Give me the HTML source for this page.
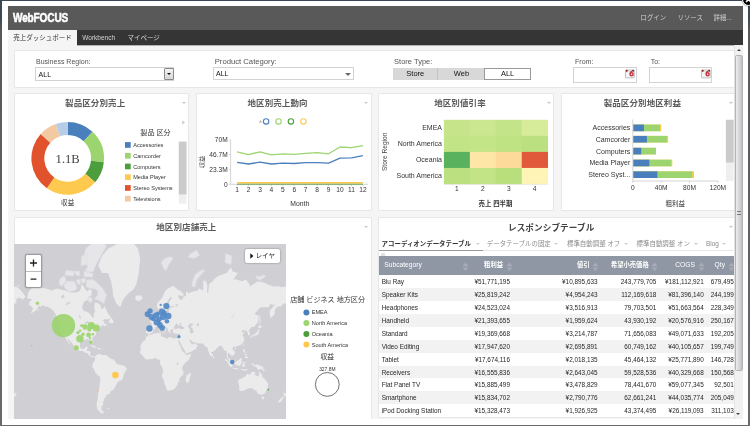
<!DOCTYPE html>
<html lang="ja"><head><meta charset="utf-8"><title>WebFOCUS</title>
<style>
html,body{margin:0;padding:0}
body{width:750px;height:426px;overflow:hidden;position:relative;background:linear-gradient(#3a4654 0,#3e4956 18px,#585858 30px,#6a6a6a 100%);font-family:"Liberation Sans","Noto Sans CJK JP",sans-serif;font-size:7px;color:#444;-webkit-text-size-adjust:none}
div,span{position:absolute;box-sizing:border-box;white-space:nowrap}
svg{position:absolute;left:0;top:0;overflow:hidden}
svg text{font-family:"Liberation Sans","Noto Sans CJK JP",sans-serif}
.lb{left:2px;top:1px;width:746px;height:423.5px;background:#fff}
.app{filter:blur(.4px);left:8px;top:6px;width:734.8px;height:413px;background:#f5f5f5;overflow:hidden}
.hdr{left:0;top:0;width:735px;height:24px;background:#595959}
.logo{left:5.4px;top:4.3px;font-weight:bold;font-size:13px;line-height:16px;color:#fff;transform:scaleX(.775);transform-origin:0 0;letter-spacing:-.2px;-webkit-text-stroke:.55px #fff}
.hl{top:6.8px;font-size:6.4px;line-height:9px;color:#cfcfcf}
.tabs{left:0;top:24px;width:735px;height:15.4px;background:#353535}
.tab{top:0;height:15.3px;font-size:6.5px;line-height:16.4px;color:#d5d5d5}
.tab.on{left:0;width:69px;background:#f5f5f5;color:#333;text-align:center}
.panel{background:#fff;border:1px solid #e7e7e7;border-radius:1px}
.pt{left:0;right:12.4px;text-align:center;font-weight:bold;font-size:8.5px;line-height:12px;margin-top:-1.5px;color:#5a5a5a;letter-spacing:.1px}
.lab{font-size:7px;line-height:9px;color:#555}
.sel{background:#fff;border:1px solid #d2d2d2;font-size:7px;line-height:11px;color:#111;padding-left:2.6px}
.caret{width:0;height:0;border-left:2.2px solid transparent;border-right:2.2px solid transparent;border-top:2.4px solid #c8c8c8}
.leg{font-size:5.6px;line-height:8px;color:#333}
.sw{width:5.6px;height:5.6px}
.sb{left:726px;top:39.3px;width:8.8px;height:374px;background:#f1f1f1;border-left:1px solid #e3e3e3}
.thumb{left:0px;top:9.5px;width:7.8px;height:316px;background:linear-gradient(90deg,#ececec,#d4d4d8 60%,#bdbdc3);border:1px solid #b4b4b8;border-radius:1.5px}
.th{top:0;font-size:6.7px;line-height:17.8px;color:#fff}
.tr{left:0;width:357px;height:12.93px}
.tr.alt{background:#f2f2f2}
.td{top:0;font-size:6.4px;line-height:14.5px;color:#262626}
.r{text-align:right}
.ttab{top:0;font-size:6.45px;line-height:10px;color:#8a8a8a}
.ttab b{color:#333;font-weight:bold}
</style></head><body>
<div class="lb"></div>
<div class="app">
<div class="hdr"><div class="logo">WebFOCUS</div>
<div class="hl" style="left:632.6px">ログイン</div><div class="hl" style="left:669.6px">リソース</div><div class="hl" style="left:705.6px">詳細...</div></div>
<div style="left:69px;top:39.4px;width:666px;height:1px;background:#b4b4b4"></div><div class="tabs"><div class="tab on">売上ダッシュボード</div><div class="tab" style="left:74.3px">Workbench</div><div class="tab" style="left:119.4px">マイページ</div></div>
<div class="panel" style="left:5.5px;top:44.0px;width:722.9px;height:38.0px;"><div class="lab" style="left:21.5px;top:6.2px">Business Region:</div><div class="sel" style="left:20.5px;top:16px;width:139.4px;height:14px;line-height:14px">ALL<div style="right:-0.4px;top:-0.4px;width:9.4px;height:12.8px;background:linear-gradient(#f4f4f4,#d6d6d6);border:1px solid #8a8a8a;border-radius:1px"><div class="caret" style="left:1.7px;top:4.6px;border-top-color:#111;border-left-width:2px;border-right-width:2px"></div></div></div><div class="lab" style="left:200.2px;top:6.2px;font-size:7.7px">Product Category:</div><div class="sel" style="left:198.9px;top:16.4px;width:140.8px;height:12.4px;line-height:12.6px;padding-left:1.6px">ALL<div class="caret" style="right:2.4px;top:4.6px;border-top-color:#6a6a6a;border-left-width:3px;border-right-width:3px;border-top-width:3px"></div></div><div class="lab" style="left:379.6px;top:6.2px;font-size:7.5px">Store Type:</div><div style="left:378.7px;top:16.6px;width:137.5px;height:12.4px;background:#d8d8d8;font-size:7.5px;line-height:12px;color:#111;text-align:center"><div style="left:0;width:45.3px;border-right:1px solid #c4c4c4;height:12px">Store</div><div style="left:45.3px;width:46px;height:12px">Web</div><div style="left:91.3px;width:46.2px;height:12px;background:#fff;border:1px solid #999;line-height:10px">ALL</div></div><div class="lab" style="left:560.6px;top:6.2px">From:</div><div class="sel" style="left:558.6px;top:16.4px;width:63.5px;height:15.4px"><svg width="10" height="10" viewBox="0 0 10 10" style="left:auto;right:.5px;top:.9px"><rect x=".5" y="1" width="8.8" height="7.9" rx=".6" fill="#f3f5f9" stroke="#9a9a9a" stroke-width=".6"/><path d="M.9 2.7H9" stroke="#d9c7b0" stroke-width=".6"/><circle cx="1.7" cy="1.8" r=".95" fill="#7d1216"/><circle cx="8.1" cy="1.8" r=".95" fill="#7d1216"/><path d="M6.9 2.1C5.6 2.9 5.1 4 5.2 5" fill="none" stroke="#c8373d" stroke-width="1.3"/><circle cx="6.6" cy="5.2" r="1.5" fill="#fff" stroke="#c8373d" stroke-width="1.5"/></svg></div><div class="lab" style="left:636.2px;top:6.2px">To:</div><div class="sel" style="left:634.2px;top:16.4px;width:63.5px;height:15.4px"><svg width="10" height="10" viewBox="0 0 10 10" style="left:auto;right:.5px;top:.9px"><rect x=".5" y="1" width="8.8" height="7.9" rx=".6" fill="#f3f5f9" stroke="#9a9a9a" stroke-width=".6"/><path d="M.9 2.7H9" stroke="#d9c7b0" stroke-width=".6"/><circle cx="1.7" cy="1.8" r=".95" fill="#7d1216"/><circle cx="8.1" cy="1.8" r=".95" fill="#7d1216"/><path d="M6.9 2.1C5.6 2.9 5.1 4 5.2 5" fill="none" stroke="#c8373d" stroke-width="1.3"/><circle cx="6.6" cy="5.2" r="1.5" fill="#fff" stroke="#c8373d" stroke-width="1.5"/></svg></div></div><div class="panel" style="left:5.5px;top:87.0px;width:175.7px;height:118.0px;"><div class="pt" style="top:4.6px">製品区分別売上</div><div class="caret" style="right:2.4px;top:8.4px"></div><svg width="176" height="118" viewBox="0 0 176 118"><path d="M52.70 28.10A36.3 36.3 0 0 1 77.46 37.85L68.66 47.29A23.4 23.4 0 0 0 52.70 41.00Z" fill="#4a7fbd"/><path d="M77.46 37.85A36.3 36.3 0 0 1 88.80 68.19L75.97 66.85A23.4 23.4 0 0 0 68.66 47.29Z" fill="#9cd56f"/><path d="M88.80 68.19A36.3 36.3 0 0 1 80.10 88.21L70.36 79.75A23.4 23.4 0 0 0 75.97 66.85Z" fill="#4b9e3b"/><path d="M80.10 88.21A36.3 36.3 0 0 1 31.88 94.14L39.28 83.57A23.4 23.4 0 0 0 70.36 79.75Z" fill="#fdc94f"/><path d="M31.88 94.14A36.3 36.3 0 0 1 25.72 40.11L35.31 48.74A23.4 23.4 0 0 0 39.28 83.57Z" fill="#e0532c"/><path d="M25.72 40.11A36.3 36.3 0 0 1 40.88 30.08L45.08 42.27A23.4 23.4 0 0 0 35.31 48.74Z" fill="#f2c9a0"/><path d="M40.88 30.08A36.3 36.3 0 0 1 52.70 28.10L52.70 41.00A23.4 23.4 0 0 0 45.08 42.27Z" fill="#b5cde6"/><text x="52.7" y="68.60000000000001" text-anchor="middle" font-size="12.6" style="font-family:'Liberation Serif',serif" fill="#444">1.1B</text><text x="52.7" y="110.9" text-anchor="middle" font-size="6.6" fill="#333">収益</text><text x="140.5" y="41.40000000000001" text-anchor="middle" font-size="7.1" fill="#333">製品 区分</text><rect x="110.0" y="48.1" width="5.7" height="5.7" fill="#4a7fbd"/><text x="118.19999999999999" y="53.0" font-size="5.6" fill="#333">Accessories</text><rect x="110.0" y="58.9" width="5.7" height="5.7" fill="#9cd56f"/><text x="118.19999999999999" y="63.8" font-size="5.6" fill="#333">Camcorder</text><rect x="110.0" y="69.6" width="5.7" height="5.7" fill="#4b9e3b"/><text x="118.19999999999999" y="74.5" font-size="5.6" fill="#333">Computers</text><rect x="110.0" y="80.3" width="5.7" height="5.7" fill="#fdc94f"/><text x="118.19999999999999" y="85.2" font-size="5.6" fill="#333">Media Player</text><rect x="110.0" y="91.1" width="5.7" height="5.7" fill="#e0532c"/><text x="118.19999999999999" y="96.0" font-size="5.6" fill="#333">Stereo Systems</text><rect x="110.0" y="101.8" width="5.7" height="5.7" fill="#f2c9a0"/><text x="118.19999999999999" y="106.8" font-size="5.6" fill="#333">Televisions</text><path d="M167.1 26.599999999999994l3 2-3 2z" fill="#ccc"/><rect x="163.8" y="47.69999999999999" width="7.7" height="62" fill="#efefef"/><rect x="163.8" y="47.69999999999999" width="7.7" height="52.7" fill="#cbcbcb"/></svg></div><div class="panel" style="left:187.9px;top:87.0px;width:175.7px;height:118.0px;"><div class="pt" style="top:4.6px">地区別売上動向</div><div class="caret" style="right:2.4px;top:8.4px"></div><svg width="176" height="118" viewBox="196.9 94 176 118"><circle cx="266" cy="121.4" r="2.7" fill="#fff" stroke="#4a7fbd" stroke-width="1.1"/><circle cx="278.4" cy="121.4" r="2.7" fill="#fff" stroke="#9cd56f" stroke-width="1.1"/><circle cx="290.8" cy="121.4" r="2.7" fill="#fff" stroke="#4b9e3b" stroke-width="1.1"/><circle cx="303.3" cy="121.4" r="2.7" fill="#fff" stroke="#fdc94f" stroke-width="1.1"/><path d="M258.8 122.8l1.6-3 1.6 3z" fill="#bbb"/><path d="M228.8 140H230.5V184.3H368M228.8 154.7h1.7M228.8 169.4h1.7M228.8 184.3h1.7" fill="none" stroke="#c9c9c9" stroke-width=".8"/><path d="M237.0 184.3v1.8M248.4 184.3v1.8M259.9 184.3v1.8M271.3 184.3v1.8M282.7 184.3v1.8M294.2 184.3v1.8M305.6 184.3v1.8M317.1 184.3v1.8M328.5 184.3v1.8M339.9 184.3v1.8M351.4 184.3v1.8M362.8 184.3v1.8" stroke="#c9c9c9" stroke-width=".8"/><polyline points="237.0,151.8 248.4,154.6 259.9,151.8 271.3,154.8 282.7,153.8 294.2,154.3 305.6,153.3 317.1,152.6 328.5,153.8 339.9,147.0 351.4,147.7 362.8,145.7" fill="none" stroke="#9cd56f" stroke-width="1.3" stroke-linejoin="round"/><polyline points="237.0,162.4 248.4,164.0 259.9,162.2 271.3,164.0 282.7,163.2 294.2,163.5 305.6,162.7 317.1,162.7 328.5,163.2 339.9,158.1 351.4,157.9 362.8,155.6" fill="none" stroke="#4a7fbd" stroke-width="1.3" stroke-linejoin="round"/><path d="M237 184.1H362.8" stroke="#4b9e3b" stroke-width="1"/><path d="M237 182.8H362.8" stroke="#fdc94f" stroke-width="1.5"/><text x="227.6" y="142.4" text-anchor="end" font-size="6.6" fill="#333">70M</text><text x="227.6" y="157.1" text-anchor="end" font-size="6.6" fill="#333">46.7M</text><text x="227.6" y="171.8" text-anchor="end" font-size="6.6" fill="#333">23.3M</text><text x="227.6" y="186.70000000000002" text-anchor="end" font-size="6.6" fill="#333">0</text><text x="237.0" y="192.4" text-anchor="middle" font-size="6.6" fill="#333">1</text><text x="248.4" y="192.4" text-anchor="middle" font-size="6.6" fill="#333">2</text><text x="259.9" y="192.4" text-anchor="middle" font-size="6.6" fill="#333">3</text><text x="271.3" y="192.4" text-anchor="middle" font-size="6.6" fill="#333">4</text><text x="282.7" y="192.4" text-anchor="middle" font-size="6.6" fill="#333">5</text><text x="294.2" y="192.4" text-anchor="middle" font-size="6.6" fill="#333">6</text><text x="305.6" y="192.4" text-anchor="middle" font-size="6.6" fill="#333">7</text><text x="317.1" y="192.4" text-anchor="middle" font-size="6.6" fill="#333">8</text><text x="328.5" y="192.4" text-anchor="middle" font-size="6.6" fill="#333">9</text><text x="339.9" y="192.4" text-anchor="middle" font-size="6.6" fill="#333">10</text><text x="351.4" y="192.4" text-anchor="middle" font-size="6.6" fill="#333">11</text><text x="362.8" y="192.4" text-anchor="middle" font-size="6.6" fill="#333">12</text><text x="299.7" y="205.6" text-anchor="middle" font-size="6.8" fill="#333">Month</text><text transform="translate(204.3 162) rotate(-90)" text-anchor="middle" font-size="6.2" fill="#333">収益</text></svg></div><div class="panel" style="left:370.3px;top:87.0px;width:175.7px;height:118.0px;"><div class="pt" style="top:4.6px">地区別値引率</div><div class="caret" style="right:2.4px;top:8.4px"></div><svg width="176" height="118" viewBox="379.3 94 176 118"><rect x="444.20" y="119.80" width="26.25" height="16.35" fill="#c6e58b"/><rect x="470.15" y="119.80" width="26.25" height="16.35" fill="#cbe78f"/><rect x="496.10" y="119.80" width="26.25" height="16.35" fill="#c4e489"/><rect x="522.05" y="119.80" width="26.25" height="16.35" fill="#d6ec9b"/><rect x="444.20" y="135.85" width="26.25" height="16.35" fill="#c3e387"/><rect x="470.15" y="135.85" width="26.25" height="16.35" fill="#c4e488"/><rect x="496.10" y="135.85" width="26.25" height="16.35" fill="#bfe283"/><rect x="522.05" y="135.85" width="26.25" height="16.35" fill="#bbe07f"/><rect x="444.20" y="151.90" width="26.25" height="16.35" fill="#59b25e"/><rect x="470.15" y="151.90" width="26.25" height="16.35" fill="#fee6a6"/><rect x="496.10" y="151.90" width="26.25" height="16.35" fill="#fdda99"/><rect x="522.05" y="151.90" width="26.25" height="16.35" fill="#e0593a"/><rect x="444.20" y="167.95" width="26.25" height="16.35" fill="#bbe07f"/><rect x="470.15" y="167.95" width="26.25" height="16.35" fill="#c2e386"/><rect x="496.10" y="167.95" width="26.25" height="16.35" fill="#b9df7d"/><rect x="522.05" y="167.95" width="26.25" height="16.35" fill="#fef4b6"/><path d="M444.2 184.4H548.0" stroke="#ddd" stroke-width=".6"/><text x="442.3" y="130.2" text-anchor="end" font-size="7" fill="#333">EMEA</text><text x="442.3" y="146.3" text-anchor="end" font-size="7" fill="#333">North America</text><text x="442.3" y="162.3" text-anchor="end" font-size="7" fill="#333">Oceania</text><text x="442.3" y="178.4" text-anchor="end" font-size="7" fill="#333">South America</text><text x="457.2" y="191" text-anchor="middle" font-size="6.6" fill="#333">1</text><text x="483.1" y="191" text-anchor="middle" font-size="6.6" fill="#333">2</text><text x="509.1" y="191" text-anchor="middle" font-size="6.6" fill="#333">3</text><text x="535.0" y="191" text-anchor="middle" font-size="6.6" fill="#333">4</text><text x="495.8" y="205.7" text-anchor="middle" font-size="6.4" fill="#333" font-weight="bold">売上 四半期</text><text transform="translate(387.6 151.8) rotate(-90)" text-anchor="middle" font-size="6.6" fill="#444">Store Region</text></svg></div><div class="panel" style="left:552.7px;top:87.0px;width:175.7px;height:118.0px;"><div class="pt" style="top:4.6px">製品区分別地区利益</div><div class="caret" style="right:2.4px;top:8.4px"></div><svg width="176" height="118" viewBox="561.7 94 176 118"><rect x="632.9" y="124.6" width="28.0" height="6.6" fill="#fdc94f"/><rect x="632.9" y="124.6" width="26.8" height="6.6" fill="#9cd56f"/><rect x="632.9" y="124.6" width="10.7" height="6.6" fill="#4a7fbd"/><text x="630" y="130.3" text-anchor="end" font-size="7" fill="#333">Accessories</text><rect x="632.9" y="135.9" width="34.9" height="6.6" fill="#fdc94f"/><rect x="632.9" y="135.9" width="33.7" height="6.6" fill="#9cd56f"/><rect x="632.9" y="135.9" width="13.7" height="6.6" fill="#4a7fbd"/><text x="630" y="141.6" text-anchor="end" font-size="7" fill="#333">Camcorder</text><rect x="632.9" y="147.8" width="22.7" height="6.6" fill="#fdc94f"/><rect x="632.9" y="147.8" width="22.7" height="6.6" fill="#9cd56f"/><rect x="632.9" y="147.8" width="8.0" height="6.6" fill="#4a7fbd"/><text x="630" y="153.5" text-anchor="end" font-size="7" fill="#333">Computers</text><rect x="632.9" y="159.7" width="39.1" height="6.6" fill="#fdc94f"/><rect x="632.9" y="159.7" width="37.9" height="6.6" fill="#9cd56f"/><rect x="632.9" y="159.7" width="16.1" height="6.6" fill="#4a7fbd"/><text x="630" y="165.4" text-anchor="end" font-size="7" fill="#333">Media Player</text><rect x="632.9" y="171.4" width="60.8" height="6.6" fill="#fdc94f"/><rect x="632.9" y="171.4" width="59.0" height="6.6" fill="#9cd56f"/><rect x="632.9" y="171.4" width="24.2" height="6.6" fill="#4a7fbd"/><text x="630" y="177.1" text-anchor="end" font-size="7" fill="#333">Stereo Syst...</text><path d="M632.5 119.5V181H717.8M632.5 181v1.8M660.9 181v1.8M689.2 181v1.8M717.5 181v1.8" fill="none" stroke="#c9c9c9" stroke-width=".8"/><text x="632.5" y="190.3" text-anchor="middle" font-size="6.6" fill="#333">0</text><text x="660.9" y="190.3" text-anchor="middle" font-size="6.6" fill="#333">40M</text><text x="689.2" y="190.3" text-anchor="middle" font-size="6.6" fill="#333">80M</text><text x="717.5" y="190.3" text-anchor="middle" font-size="6.6" fill="#333">120M</text><text x="675" y="205.6" text-anchor="middle" font-size="6.6" fill="#333">粗利益</text><rect x="725.6" y="119.8" width="7.7" height="61.2" fill="#efefef"/><rect x="725.6" y="119.8" width="7.7" height="42.7" fill="#cbcbcb"/></svg></div><div class="panel" style="left:5.5px;top:211.0px;width:358.1px;height:215.0px;"><div class="pt" style="top:4.8px">地区別店舗売上</div><div class="caret" style="right:2.4px;top:8.4px"></div><svg width="272" height="175.9" viewBox="14 243.5 272 175.9" style="left:-0.5px;top:25.5px"><rect x="14" y="243.5" width="272" height="175.9" fill="#cfcfd4"/><defs><g id="w"><path d="M27.0 296.9L28.5 291.5L32.2 287.3L35.6 285.0L40.5 286.8L47.2 288.6L51.8 290.1L57.0 287.9L60.8 289.0L65.2 290.1L70.5 292.1L76.5 292.1L80.2 290.1L81.8 283.3L84.8 287.9L87.0 291.1L89.2 289.0L91.9 290.1L91.5 295.0L88.5 296.0L87.8 299.5L84.8 300.4L83.2 302.8L82.1 307.4L83.6 310.2L87.0 311.2L89.2 312.5L91.5 315.5L93.0 317.5L93.8 316.7L93.8 313.6L95.2 310.2L94.1 307.4L94.9 302.0L98.2 302.8L100.5 304.4L100.9 307.7L102.8 308.4L104.2 305.5L106.5 309.5L108.0 312.9L110.2 315.5L111.0 316.9L108.8 318.7L104.2 318.8L102.8 319.9L100.5 322.1L102.4 320.6L104.2 320.5L104.2 322.1L104.6 323.3L106.5 323.8L107.6 323.0L107.2 324.3L105.4 325.2L103.5 326.2L103.9 324.6L102.8 324.8L100.5 326.2L99.9 327.7L100.5 328.0L99.0 328.5L97.5 329.2L96.4 331.6L96.0 334.0L94.5 335.4L92.2 337.6L93.0 341.5L92.6 343.0L91.9 342.5L90.9 340.6L90.8 339.3L89.2 339.2L87.0 338.6L85.5 339.6L84.0 339.2L82.5 339.3L80.2 340.6L79.9 343.1L79.7 345.6L81.0 348.0L82.1 348.6L84.8 348.1L85.1 346.4L87.8 346.0L87.0 348.8L86.5 350.3L88.5 350.5L90.6 351.1L90.2 354.2L91.1 355.7L93.0 355.6L94.5 355.5L95.2 356.5L94.9 357.1L94.1 356.1L93.0 357.0L92.2 356.5L90.8 356.3L88.9 355.0L87.4 352.7L84.8 351.9L82.5 350.3L80.6 350.6L78.0 349.6L75.4 348.5L73.9 347.2L73.9 345.6L72.0 342.7L70.5 341.0L68.6 338.9L67.0 337.4L67.5 339.3L69.4 342.3L70.9 344.8L69.0 343.1L67.1 340.6L66.0 338.5L65.1 336.7L62.6 334.9L61.5 332.6L60.0 329.4L59.8 326.7L60.0 323.3L59.5 320.9L60.8 320.2L59.2 318.7L57.4 317.3L55.5 313.6L53.2 310.2L50.6 308.1L48.0 306.2L45.0 305.9L42.0 304.4L40.5 306.7L39.0 304.4L37.5 308.1L34.5 310.9L30.8 312.9L33.0 308.1L31.5 305.9L28.9 304.4L29.6 301.2L32.2 298.6L29.2 298.6L27.0 296.9ZM98.2 265.0L102.0 255.6L108.0 248.2L119.2 242.4L130.5 239.2L138.0 248.2L140.2 257.8L138.8 272.4L136.5 283.3L133.5 289.0L128.2 293.1L124.5 296.9L122.2 301.2L120.8 305.9L118.5 305.2L116.2 302.8L114.8 299.5L112.9 294.1L112.5 287.9L111.0 280.8L108.0 272.4L102.0 272.4L98.2 265.0ZM108.5 321.8L111.4 322.7L113.2 322.8L113.5 320.8L111.4 317.3L109.9 318.5ZM89.2 345.6L93.0 344.6L97.3 347.0L94.9 347.3L91.5 345.7ZM97.1 348.4L99.0 347.2L101.6 348.2L99.4 348.9ZM135.0 296.9L136.5 295.0L141.0 295.0L142.9 297.8L139.5 300.5L136.1 299.8ZM57.0 318.2L59.2 319.1L60.4 320.9L58.9 320.5ZM95.0 356.1L96.4 354.4L98.2 354.0L99.4 353.1L100.5 353.8L102.0 354.6L105.0 354.6L106.5 354.4L108.0 356.1L110.2 358.0L114.0 358.9L115.5 361.7L116.6 363.3L120.0 364.4L123.0 364.8L125.2 366.3L126.8 367.8L126.8 369.3L124.9 371.6L123.8 373.9L123.4 376.2L122.2 379.4L120.0 380.2L117.8 381.5L116.6 383.5L115.5 386.1L113.2 389.6L111.0 390.6L109.9 391.9L109.9 393.4L106.5 394.3L105.8 396.3L104.2 398.3L103.9 400.4L102.4 402.0L103.5 403.6L101.2 407.1L101.6 409.5L104.2 411.8L102.4 413.2L99.8 411.4L97.5 408.9L96.4 403.6L97.5 399.3L97.9 394.3L99.0 388.7L99.4 385.2L100.1 381.1L100.3 376.6L98.2 375.0L95.6 372.7L93.8 368.5L92.0 366.3L92.6 364.0L93.0 362.1L94.1 361.0L95.0 359.5L94.9 357.2L95.0 356.1ZM148.9 333.5L146.2 332.6L145.9 331.0L146.4 328.2L146.1 326.5L147.0 326.0L151.5 326.3L152.0 323.6L149.5 320.9L151.9 320.6L151.7 319.4L153.2 319.6L154.2 318.1L155.6 317.4L156.5 315.5L158.2 314.8L159.5 314.2L159.2 310.2L160.9 309.2L160.5 312.2L161.2 314.2L163.5 314.2L166.9 313.3L168.8 312.2L168.8 310.2L170.6 306.9L174.0 306.4L175.5 305.9L171.8 305.6L169.9 305.9L169.0 304.4L169.1 301.2L171.8 297.8L171.0 296.3L169.1 298.6L166.1 302.8L165.8 305.2L167.1 306.2L165.4 309.5L165.0 311.3L163.7 312.2L162.8 312.2L162.4 310.9L161.5 308.1L160.9 306.7L159.0 308.5L157.3 307.7L156.8 304.4L157.5 302.0L160.5 299.5L162.8 296.0L164.2 292.1L166.5 289.0L169.5 287.3L172.3 285.4L174.0 286.1L176.2 287.5L177.8 289.4L180.0 290.1L183.8 294.1L183.0 295.6L179.2 295.0L177.8 294.6L178.9 297.8L180.8 299.5L183.0 298.6L183.0 296.3L186.0 295.6L186.0 291.1L189.0 292.7L193.5 290.7L198.0 290.1L198.8 287.9L203.2 290.1L203.2 285.7L203.2 280.8L205.5 280.0L207.4 284.5L207.0 292.1L208.1 292.1L209.2 283.3L213.0 280.8L213.4 279.3L218.2 275.4L226.5 272.4L231.0 266.8L232.5 270.8L237.8 272.4L233.2 279.5L235.5 278.7L238.1 279.5L242.2 280.8L246.0 279.0L248.2 282.1L250.5 285.7L254.2 283.3L258.0 280.8L265.5 282.6L267.0 283.8L273.0 285.7L274.5 286.1L279.0 285.7L281.2 286.8L285.0 286.1L288.0 287.3L291.8 291.1L295.5 296.0L293.2 299.0L288.8 296.9L286.5 298.6L286.1 302.0L287.6 302.3L283.5 303.3L280.5 305.9L277.5 305.9L275.2 308.8L274.5 311.6L274.9 313.2L273.0 315.5L270.5 317.9L269.6 312.9L269.6 310.2L272.2 307.4L275.2 303.6L273.0 304.4L270.4 303.6L268.9 306.7L264.8 306.7L260.2 306.9L258.0 309.5L254.6 313.3L256.5 314.4L258.8 315.5L258.4 317.9L258.0 321.4L256.1 324.1L254.2 326.2L252.0 326.5L250.5 327.2L250.1 328.7L248.6 329.9L250.0 332.6L249.8 334.3L247.9 334.9L247.9 332.1L246.8 331.6L246.8 330.2L246.4 329.7L244.1 330.7L244.3 328.9L241.5 330.7L241.9 331.6L243.4 331.9L244.9 332.4L243.0 333.5L242.4 334.4L243.8 336.7L244.5 338.9L243.8 340.6L242.6 342.7L240.8 344.4L238.5 345.3L235.9 346.1L235.5 346.9L234.4 345.8L233.0 346.8L232.3 348.0L233.2 349.6L234.8 351.1L235.0 353.4L233.2 354.6L231.8 355.9L231.8 355.0L230.6 354.6L229.5 353.0L228.4 352.3L228.0 353.4L227.5 355.3L228.4 357.2L230.2 358.7L230.6 360.6L231.2 361.4L229.1 360.4L228.2 358.4L226.7 356.5L226.9 353.4L226.3 350.3L225.0 350.0L223.7 350.3L223.9 348.8L222.0 346.4L221.6 345.2L219.8 345.6L218.2 346.0L217.9 347.2L216.8 347.6L214.9 350.0L213.2 350.7L213.2 352.7L212.8 354.7L211.7 355.7L211.1 356.5L210.2 355.0L209.1 352.7L208.1 350.3L207.6 348.0L207.5 346.4L205.9 346.5L204.8 345.3L203.6 343.9L203.0 343.1L199.5 343.0L196.1 342.5L195.4 341.5L193.5 341.7L191.6 340.8L190.5 338.9L189.4 338.9L189.4 340.2L190.5 341.7L191.6 343.7L193.5 343.8L195.2 342.1L195.4 343.5L197.0 344.3L197.8 345.2L196.5 346.9L196.3 348.0L194.2 349.6L192.0 350.7L189.4 351.9L186.8 352.8L185.6 352.9L185.1 351.1L184.9 350.0L183.4 348.0L182.2 346.0L181.1 343.7L179.6 341.0L179.1 339.3L178.7 340.8L177.4 338.9L177.2 337.8L178.7 337.8L179.2 336.3L179.9 334.3L180.0 333.0L178.5 333.2L177.4 333.4L175.9 333.1L174.8 333.2L173.6 332.6L172.7 331.2L173.2 330.2L172.7 329.7L173.0 329.3L174.8 328.7L176.2 328.5L178.1 327.7L179.2 327.7L180.4 328.4L181.9 328.7L184.1 328.2L184.1 327.0L182.2 325.7L181.1 324.9L180.8 324.3L181.5 323.0L182.4 322.2L181.1 322.5L179.2 323.3L180.4 324.3L179.2 324.8L178.1 325.2L177.4 324.2L178.3 323.4L176.6 322.9L175.3 324.3L174.4 325.9L173.8 327.2L174.4 328.2L174.8 328.5L173.6 328.9L172.7 329.0L171.0 328.9L170.8 329.7L170.1 329.2L170.0 330.4L171.0 331.6L170.2 331.8L170.4 333.1L169.9 333.1L169.3 332.8L168.9 331.4L168.0 330.0L167.6 328.2L167.2 327.5L166.1 326.7L164.6 325.7L163.9 324.4L163.3 324.0L162.2 324.3L162.3 325.5L163.2 326.2L165.0 327.8L166.9 329.5L165.8 329.3L165.4 329.9L165.8 330.7L165.4 331.3L164.8 331.6L165.0 330.9L164.8 329.7L163.9 329.0L162.4 328.2L160.9 326.8L160.5 325.7L159.6 325.3L158.6 325.9L157.5 326.6L156.0 326.2L155.2 327.2L155.4 327.9L153.6 329.0L152.8 330.2L153.2 331.0L152.5 332.0L151.5 332.8L149.6 332.9L148.9 333.5ZM148.6 333.7L151.5 334.3L153.8 333.1L156.8 332.8L160.5 332.3L161.2 332.6L160.7 335.1L161.2 335.8L164.2 336.8L167.2 338.6L168.0 337.1L170.2 336.4L171.8 337.4L174.8 338.0L176.2 337.6L177.2 337.8L177.4 338.9L178.1 340.6L178.9 342.7L179.8 344.8L180.9 346.4L181.0 348.1L182.5 350.7L184.1 352.3L185.5 353.0L185.4 353.8L186.8 354.6L189.0 354.0L191.4 353.4L191.2 354.6L189.8 357.2L188.6 359.5L186.4 361.4L184.5 363.3L183.4 364.4L182.6 365.9L182.2 367.4L182.6 369.3L183.4 370.8L183.5 373.9L181.5 375.8L179.6 377.8L179.5 380.6L177.8 382.3L177.6 384.4L176.2 386.1L174.4 388.5L172.3 389.6L169.5 389.8L168.0 390.4L166.8 389.6L166.5 387.9L165.4 385.0L164.2 382.7L163.9 379.8L162.0 376.2L161.8 374.7L163.1 371.6L162.9 369.3L162.2 367.0L161.2 365.3L159.8 363.3L160.1 361.7L160.3 359.9L159.4 359.0L157.9 359.3L156.4 357.8L154.1 357.8L151.9 358.7L150.0 358.6L147.4 359.2L146.2 358.7L144.4 357.4L143.0 356.1L142.9 355.2L141.8 354.2L140.4 353.0L139.9 351.4L140.6 350.3L140.8 348.0L140.2 346.4L141.0 344.2L142.1 342.3L143.2 340.8L144.8 339.9L145.7 339.1L145.7 337.6L146.6 336.0L147.9 335.4L148.6 333.7ZM190.0 371.6L190.9 374.3L190.1 376.2L188.6 381.9L186.8 382.3L185.6 380.2L186.0 377.8L186.4 375.0L188.2 373.9L190.0 371.6ZM148.7 319.1L150.4 318.7L154.1 317.5L154.3 315.8L153.2 315.5L152.8 314.2L151.9 312.9L151.5 311.6L151.5 309.2L150.4 309.2L150.8 308.0L149.2 308.0L148.5 309.5L148.9 311.6L149.4 313.2L150.8 314.2L150.6 315.1L149.6 315.1L149.8 316.3L149.1 316.9L150.8 317.4L148.7 319.1ZM145.5 316.7L148.3 316.4L148.5 314.8L148.9 313.6L147.8 312.5L146.6 313.6L145.5 314.2L145.5 316.7ZM251.2 335.1L252.4 334.0L255.0 333.8L255.8 332.3L257.2 331.6L258.0 329.7L258.2 328.4L259.1 328.4L259.5 330.2L258.8 331.6L258.6 333.5L258.0 334.4L256.9 334.7L255.8 334.8L255.0 335.8L254.2 334.9L252.8 335.1L251.2 335.4ZM250.5 335.8L251.8 335.6L251.6 337.6L250.9 337.8L250.5 336.7ZM252.4 335.4L253.9 335.2L253.6 336.0L252.8 336.4ZM258.0 328.2L258.4 326.4L259.3 324.2L262.0 326.2L260.6 327.7L258.8 327.2L258.0 328.2ZM259.5 313.8L260.2 316.7L260.6 319.6L260.2 323.0L259.5 323.6L259.5 320.2L259.3 316.7L259.5 313.8ZM243.8 343.0L244.5 343.1L243.8 345.6L243.2 344.8L243.8 343.0ZM234.8 347.2L236.2 347.2L235.9 348.4L234.5 348.2ZM243.4 348.4L244.7 348.5L244.5 350.3L246.0 352.7L244.5 352.0L243.4 351.5L243.0 350.3ZM244.5 357.2L245.6 356.1L247.1 355.2L247.9 357.2L247.1 358.2L246.0 357.6ZM244.5 353.8L246.0 353.0L247.1 354.2L246.0 355.0L244.9 355.2ZM234.8 361.4L236.2 361.2L237.8 360.0L239.6 358.7L240.8 357.2L242.2 358.7L241.3 359.9L242.1 361.7L241.1 362.9L240.4 365.1L238.9 365.5L237.8 364.9L235.7 364.6L234.8 362.9L234.8 361.4ZM224.5 358.3L226.1 358.6L228.4 360.8L230.6 363.1L232.5 364.8L232.3 366.9L231.4 366.6L229.5 365.4L228.2 363.1L226.9 361.1L225.0 359.5L224.5 358.3ZM232.0 367.6L234.4 367.5L236.2 367.4L238.8 368.3L238.8 369.0L235.5 368.7L232.9 368.1L232.0 367.6ZM240.0 368.7L242.2 368.7L245.2 368.7L246.8 368.7L248.2 368.9L246.0 370.2L243.0 369.9L240.8 369.3ZM242.6 366.6L242.2 364.8L243.0 362.1L243.8 361.6L246.8 361.4L245.6 362.2L243.4 362.3L244.1 363.3L245.5 363.2L244.3 364.0L245.2 365.5L244.9 366.5L243.8 365.5L243.4 366.6L242.6 366.6ZM251.2 363.1L253.5 363.1L254.2 365.0L256.5 363.8L258.8 364.5L261.8 365.7L263.6 367.0L262.9 367.8L264.4 369.3L265.9 370.4L263.2 370.0L261.0 368.3L259.5 369.4L257.2 368.5L256.5 366.6L254.2 365.8L252.4 364.6L251.2 363.1ZM213.0 355.1L214.3 356.9L213.8 358.0L213.0 357.8L212.8 356.5ZM238.1 379.4L238.5 382.7L239.2 386.1L239.2 389.9L241.5 390.6L245.6 389.6L247.5 388.0L251.2 387.4L253.5 388.5L254.8 390.4L256.3 388.7L256.5 391.0L258.0 393.2L260.6 394.1L262.7 394.3L264.0 393.2L265.5 392.4L266.4 389.6L267.8 387.0L268.1 384.4L267.8 382.3L266.1 380.2L264.8 378.2L262.7 377.0L262.1 373.9L260.6 373.3L259.9 370.6L259.1 372.3L258.8 375.7L257.2 375.8L254.6 373.9L255.6 371.7L252.8 371.2L251.2 371.7L250.1 373.9L249.0 373.9L247.5 373.1L246.0 375.0L244.7 376.2L242.2 377.8L240.0 378.6L238.1 379.4ZM261.5 396.0L264.2 396.2L264.0 398.3L262.5 398.9L261.9 397.5ZM282.5 390.0L283.9 391.8L285.0 392.9L286.9 393.1L285.8 394.8L284.5 396.9L284.1 395.1L283.4 394.6L284.1 392.9L282.5 390.0ZM282.5 395.8L283.7 397.0L282.5 398.9L281.2 400.9L279.8 402.1L277.9 401.4L279.4 399.3L281.5 397.3L282.5 395.8ZM159.2 328.7L160.3 328.7L160.2 330.5L159.4 330.7ZM159.5 327.2L160.1 326.7L160.1 328.2L159.6 328.1ZM162.4 331.6L164.6 331.5L164.4 332.9L162.5 332.1ZM170.6 334.0L172.7 334.2L172.5 334.4L170.7 334.3ZM177.2 334.4L178.9 333.9L178.3 334.7L177.4 334.7ZM37.1 309.5L38.8 308.8L38.6 310.2L37.5 310.5ZM36.0 347.2L36.8 347.3L36.4 348.0ZM53.2 314.2L54.1 314.4L54.8 316.4L53.6 315.5ZM102.6 348.4L103.7 348.5L103.7 348.8L102.6 348.8ZM94.3 348.5L95.8 348.7L95.2 348.9ZM107.2 407.7L109.5 407.6L109.1 408.7L107.6 408.6ZM161.2 312.0L162.4 311.6L162.2 312.9L161.4 312.6ZM166.7 309.0L167.2 309.1L166.8 310.2Z" fill="#ebebeb"/><path d="M93.0 279.0L96.8 282.1L102.0 287.3L106.5 294.6L105.0 298.6L104.2 302.8L102.0 302.0L99.0 299.5L94.5 298.6L97.5 295.0L98.2 291.1L94.5 287.9L89.2 287.9L86.2 285.7L87.0 279.5L93.0 279.0ZM65.2 287.9L69.0 291.1L74.2 290.1L77.2 287.9L74.2 280.8L67.5 280.8L63.8 284.5ZM59.2 283.3L61.5 285.7L66.0 280.8L64.5 275.4L60.0 278.2ZM85.5 270.8L93.0 271.4L96.0 263.9L102.0 253.3L106.5 245.4L96.8 239.2L85.5 248.2L84.0 257.8L87.8 265.7ZM84.0 270.8L93.0 273.3L92.2 276.5L84.0 276.2ZM65.2 274.5L73.5 275.4L74.2 270.8L66.0 270.1ZM81.0 265.0L87.0 263.9L87.0 253.3L81.8 255.6ZM81.4 278.2L85.5 278.2L85.1 282.1L81.8 282.1ZM76.5 279.5L80.2 278.7L80.2 284.0L77.2 283.3ZM75.0 270.8L79.5 270.8L79.5 275.4L75.8 274.5ZM87.8 297.8L90.0 296.0L92.6 299.5L90.8 302.0L88.5 300.4ZM161.2 261.9L165.0 257.8L169.5 256.5L173.2 257.8L168.8 263.9L165.8 270.1L163.5 267.5ZM192.0 285.7L195.0 286.4L196.5 279.5L204.8 269.8L202.5 269.2L195.0 273.9L192.0 283.3ZM225.0 261.9L231.0 263.9L231.8 255.6L225.8 253.3ZM255.8 275.4L260.2 275.9L264.0 274.5L265.5 275.9L260.2 279.5L257.2 278.2ZM286.9 285.7L289.9 285.0L288.0 286.1ZM188.2 256.5L194.2 257.8L199.5 254.7L196.5 249.8L190.5 253.3Z" fill="#e6e6e8" stroke="#e0e0e3" stroke-width=".8" stroke-linejoin="round"/><path d="M189.8 323.0L192.8 323.0L192.8 324.6L191.2 325.2L190.9 327.2L192.4 327.2L192.8 329.2L193.5 330.7L193.3 332.6L191.2 332.9L189.8 332.1L190.1 329.4L188.6 326.7L188.2 325.2L189.8 323.0ZM196.9 323.0L198.8 323.0L198.8 325.4L196.9 325.7ZM230.8 317.3L232.5 316.1L235.1 312.2L235.3 312.2L233.2 316.1L231.4 317.5ZM176.8 362.3L178.5 362.3L178.3 364.4L176.8 364.2ZM84.0 322.7L87.0 320.8L89.2 321.6L89.6 323.0L87.8 323.0L85.5 322.9ZM87.2 327.7L88.3 327.7L89.1 324.1L87.8 323.8ZM89.6 323.6L92.2 323.6L93.0 325.2L91.1 326.7L90.4 325.7ZM90.5 328.0L93.8 326.9L95.8 326.2L95.6 325.5L93.4 326.2L90.8 327.5ZM60.8 296.0L63.8 294.1L64.5 296.9L62.2 297.8ZM65.2 304.4L67.5 302.0L70.9 301.5L69.0 303.6ZM78.8 314.8L80.2 314.4L80.8 318.5L79.9 318.5ZM175.9 305.9L177.6 305.5L177.4 303.6L175.5 304.1Z" fill="#cfcfd4"/></g></defs><use href="#w"/><use href="#w" x="-270"/><use href="#w" x="270"/><circle cx="63.5" cy="325.1" r="11.70" fill="#9bd46c" fill-opacity=".92"/><circle cx="81.8" cy="325.1" r="1.68" fill="#9bd46c" fill-opacity=".92"/><circle cx="85.1" cy="326.5" r="2.64" fill="#9bd46c" fill-opacity=".92"/><circle cx="91.4" cy="325.1" r="3.60" fill="#9bd46c" fill-opacity=".92"/><circle cx="96.3" cy="327.5" r="3.60" fill="#9bd46c" fill-opacity=".92"/><circle cx="89.3" cy="328.9" r="2.04" fill="#9bd46c" fill-opacity=".92"/><circle cx="78" cy="332.1" r="1.68" fill="#9bd46c" fill-opacity=".92"/><circle cx="83" cy="333.8" r="1.68" fill="#9bd46c" fill-opacity=".92"/><circle cx="88.6" cy="334.5" r="2.40" fill="#9bd46c" fill-opacity=".92"/><circle cx="92.8" cy="333.8" r="1.32" fill="#9bd46c" fill-opacity=".92"/><circle cx="79.9" cy="338.3" r="3.72" fill="#9bd46c" fill-opacity=".92"/><circle cx="90" cy="337.7" r="1.08" fill="#9bd46c" fill-opacity=".92"/><circle cx="91" cy="341.8" r="1.68" fill="#9bd46c" fill-opacity=".92"/><circle cx="76.3" cy="347.2" r="2.52" fill="#9bd46c" fill-opacity=".92"/><circle cx="80.1" cy="330.3" r="1.32" fill="#9bd46c" fill-opacity=".92"/><circle cx="37.4" cy="302.8" r="1.68" fill="#9bd46c" fill-opacity=".92"/><circle cx="31.5" cy="345" r="0.84" fill="#9bd46c" fill-opacity=".92"/><circle cx="166.3" cy="305.5" r="3.10" fill="#5289c7" fill-opacity=".92"/><circle cx="160.7" cy="304.4" r="1.15" fill="#5289c7" fill-opacity=".92"/><circle cx="162.1" cy="311.1" r="3.10" fill="#5289c7" fill-opacity=".92"/><circle cx="150.1" cy="310.4" r="2.64" fill="#5289c7" fill-opacity=".92"/><circle cx="147.6" cy="313.7" r="2.88" fill="#5289c7" fill-opacity=".92"/><circle cx="151.4" cy="316.5" r="2.88" fill="#5289c7" fill-opacity=".92"/><circle cx="156.1" cy="315.1" r="3.22" fill="#5289c7" fill-opacity=".92"/><circle cx="163.1" cy="316.1" r="3.56" fill="#5289c7" fill-opacity=".92"/><circle cx="168.3" cy="315.4" r="3.22" fill="#5289c7" fill-opacity=".92"/><circle cx="166.9" cy="320.7" r="2.30" fill="#5289c7" fill-opacity=".92"/><circle cx="156.8" cy="321.7" r="3.22" fill="#5289c7" fill-opacity=".92"/><circle cx="159.9" cy="324.5" r="2.88" fill="#5289c7" fill-opacity=".92"/><circle cx="162.1" cy="327.3" r="2.88" fill="#5289c7" fill-opacity=".92"/><circle cx="149.4" cy="328" r="3.22" fill="#5289c7" fill-opacity=".92"/><circle cx="179" cy="336.2" r="1.61" fill="#5289c7" fill-opacity=".92"/><circle cx="232.2" cy="361.5" r="2.18" fill="#5289c7" fill-opacity=".92"/><circle cx="212.3" cy="352.3" r="0.57" fill="#5289c7" fill-opacity=".92"/><circle cx="153.5" cy="318.5" r="2.30" fill="#5289c7" fill-opacity=".92"/><circle cx="159" cy="319" r="2.53" fill="#5289c7" fill-opacity=".92"/><circle cx="164.5" cy="312.5" r="2.30" fill="#5289c7" fill-opacity=".92"/><circle cx="158" cy="313" r="2.07" fill="#5289c7" fill-opacity=".92"/><circle cx="115.4" cy="374.6" r="3.3" fill="#fdc94f"/><circle cx="97.9" cy="390.1" r=".8" fill="#f6b26b"/><circle cx="268.4" cy="389.3" r=".8" fill="#4b9e3b"/></svg><div style="left:10.1px;top:36.3px;width:17px;height:33.6px;background:#fff;border:1px solid #9a9a9a;border-radius:2.2px;box-shadow:0 0 1.5px rgba(0,0,0,.35)"><div style="left:0;top:15.9px;width:15px;height:0;border-top:1px solid #bbb"></div><svg width="15" height="32" viewBox="0 0 15 32"><path d="M4 8h7M7.5 4.5v7M4.6 24.2h5.8" stroke="#222" stroke-width="1.3" fill="none"/></svg></div><div style="left:230.5px;top:30.6px;width:35px;height:14.6px;background:#fff;border-radius:2px;box-shadow:0 0 2px rgba(0,0,0,.45);font-size:6.6px;line-height:14.2px;color:#222;padding-left:10.4px"><svg width="4" height="6" viewBox="0 0 4 6" style="left:4.6px;top:4.3px"><path d="M.3 .3L3.4 3 .3 5.7z" fill="#111"/></svg>レイヤ</div><svg width="86" height="176" viewBox="286 243.4 86 176" style="left:271.5px;top:25.5px"><text x="327.6" y="301.4" text-anchor="middle" font-size="7.1" fill="#333">店舗 ビジネス 地方区分</text><circle cx="306.4" cy="311.8" r="3" fill="#4a7fbd"/><text x="311.7" y="313.8" font-size="5.6" fill="#333">EMEA</text><circle cx="306.4" cy="322.4" r="3" fill="#9cd56f"/><text x="311.7" y="324.4" font-size="5.6" fill="#333">North America</text><circle cx="306.4" cy="333.4" r="3" fill="#4b9e3b"/><text x="311.7" y="335.4" font-size="5.6" fill="#333">Oceania</text><circle cx="306.4" cy="344" r="3" fill="#fdc94f"/><text x="311.7" y="346" font-size="5.6" fill="#333">South America</text><text x="327.3" y="358" text-anchor="middle" font-size="6.8" fill="#333">収益</text><text x="327.3" y="370.4" text-anchor="middle" font-size="4.9" fill="#333">327.8M</text><circle cx="327.3" cy="383.8" r="11.9" fill="#fff" stroke="#333" stroke-width=".7"/></svg></div><div class="panel" style="left:370.3px;top:211.0px;width:358.1px;height:201.4px;"><div class="pt" style="top:5.6px;font-size:8.6px;color:#444">レスポンシブテーブル</div><div class="caret" style="right:2.4px;top:8.4px"></div><div style="left:0;top:21.1px;width:356px;height:12px"><div class="ttab" style="left:2.3px"><b>アコーディオンデータテーブル</b></div><div class="caret" style="left:96.5px;top:4.2px;border-left-width:2.2px;border-right-width:2.2px;border-top-width:2.3px;border-top-color:#cdcdcd"></div><div class="ttab" style="left:107.5px">データテーブルの固定</div><div class="caret" style="left:174.5px;top:4.2px;border-left-width:2.2px;border-right-width:2.2px;border-top-width:2.3px;border-top-color:#cdcdcd"></div><div class="ttab" style="left:187.7px">標準自動調整 オフ</div><div class="caret" style="left:245.2px;top:4.2px;border-left-width:2.2px;border-right-width:2.2px;border-top-width:2.3px;border-top-color:#cdcdcd"></div><div class="ttab" style="left:257.3px">標準自動調整 オン</div><div class="caret" style="left:314.5px;top:4.2px;border-left-width:2.2px;border-right-width:2.2px;border-top-width:2.3px;border-top-color:#cdcdcd"></div><div class="ttab" style="left:326.7px">Blog</div><div class="caret" style="left:342.5px;top:4.2px;border-left-width:2.2px;border-right-width:2.2px;border-top-width:2.3px;border-top-color:#cdcdcd"></div></div><div style="left:0;top:31.6px;width:104.2px;height:1px;background:#999"></div><div style="left:104.2px;top:31.6px;width:250px;height:1px;background:#e6e6e6"></div><div style="left:0;top:37.6px;width:355.7px;height:170px;overflow:hidden"><div style="left:0;top:0;width:355.7px;height:19.4px;background:#9097a4"><div class="th" style="left:5.0px">Subcategory</div><svg width="7" height="10" viewBox="0 0 7 10" style="left:82.6px;top:6.4px"><path d="M.6 4.3L3.5 .5 6.4 4.3z" fill="#a8aeb9"/><path d="M.6 5.5L3.5 9.3 6.4 5.5z" fill="#a4aab6"/></svg><div class="th r" style="right:232.0px;font-weight:bold;font-size:6.3px">粗利益</div><svg width="7" height="10" viewBox="0 0 7 10" style="left:126.4px;top:6.4px"><path d="M.6 4.3L3.5 .5 6.4 4.3z" fill="#a8aeb9"/><path d="M.6 5.5L3.5 9.3 6.4 5.5z" fill="#a4aab6"/></svg><div class="th r" style="right:145.3px;font-weight:bold;font-size:6.3px">値引</div><svg width="7" height="10" viewBox="0 0 7 10" style="left:212.4px;top:6.4px"><path d="M.6 4.3L3.5 .5 6.4 4.3z" fill="#a8aeb9"/><path d="M.6 5.5L3.5 9.3 6.4 5.5z" fill="#a4aab6"/></svg><div class="th r" style="right:86.3px;font-weight:bold;font-size:6.3px">希望小売価格</div><svg width="7" height="10" viewBox="0 0 7 10" style="left:271.9px;top:6.4px"><path d="M.6 4.3L3.5 .5 6.4 4.3z" fill="#a8aeb9"/><path d="M.6 5.5L3.5 9.3 6.4 5.5z" fill="#a4aab6"/></svg><div class="th r" style="right:40.0px">COGS</div><svg width="7" height="10" viewBox="0 0 7 10" style="left:319.0px;top:6.4px"><path d="M.6 4.3L3.5 .5 6.4 4.3z" fill="#a8aeb9"/><path d="M.6 5.5L3.5 9.3 6.4 5.5z" fill="#a4aab6"/></svg><div class="th" style="left:335.3px">Qty</div><svg width="7" height="10" viewBox="0 0 7 10" style="left:348.6px;top:6.4px"><path d="M.6 4.3L3.5 .5 6.4 4.3z" fill="#a8aeb9"/><path d="M.6 5.5L3.5 9.3 6.4 5.5z" fill="#a4aab6"/></svg></div><div class="tr" style="top:19.40px;width:355.7px"><div class="td" style="left:2.4px">Blu Ray</div><div class="td r" style="right:225.0px">¥51,771,195</div><div class="td r" style="right:137.4px">¥10,895,633</div><div class="td r" style="right:78.7px">243,779,705</div><div class="td r" style="right:31.3px">¥181,112,921</div><div class="td r" style="right:1.2px">679,495</div></div><div class="tr alt" style="top:32.33px;width:355.7px"><div class="td" style="left:2.4px">Speaker Kits</div><div class="td r" style="right:225.0px">¥25,819,242</div><div class="td r" style="right:137.4px">¥4,954,243</div><div class="td r" style="right:78.7px">112,169,618</div><div class="td r" style="right:31.3px">¥81,396,140</div><div class="td r" style="right:1.2px">244,199</div></div><div class="tr" style="top:45.26px;width:355.7px"><div class="td" style="left:2.4px">Headphones</div><div class="td r" style="right:225.0px">¥24,523,024</div><div class="td r" style="right:137.4px">¥3,516,913</div><div class="td r" style="right:78.7px">79,703,501</div><div class="td r" style="right:31.3px">¥51,663,564</div><div class="td r" style="right:1.2px">228,349</div></div><div class="tr alt" style="top:58.19px;width:355.7px"><div class="td" style="left:2.4px">Handheld</div><div class="td r" style="right:225.0px">¥21,393,655</div><div class="td r" style="right:137.4px">¥1,959,624</div><div class="td r" style="right:78.7px">43,930,192</div><div class="td r" style="right:31.3px">¥20,576,916</div><div class="td r" style="right:1.2px">250,167</div></div><div class="tr" style="top:71.12px;width:355.7px"><div class="td" style="left:2.4px">Standard</div><div class="td r" style="right:225.0px">¥19,369,668</div><div class="td r" style="right:137.4px">¥3,214,787</div><div class="td r" style="right:78.7px">71,656,083</div><div class="td r" style="right:31.3px">¥49,071,633</div><div class="td r" style="right:1.2px">192,205</div></div><div class="tr alt" style="top:84.05px;width:355.7px"><div class="td" style="left:2.4px">Video Editing</div><div class="td r" style="right:225.0px">¥17,947,620</div><div class="td r" style="right:137.4px">¥2,695,891</div><div class="td r" style="right:78.7px">60,749,162</div><div class="td r" style="right:31.3px">¥40,105,657</div><div class="td r" style="right:1.2px">199,749</div></div><div class="tr" style="top:96.98px;width:355.7px"><div class="td" style="left:2.4px">Tablet</div><div class="td r" style="right:225.0px">¥17,674,116</div><div class="td r" style="right:137.4px">¥2,018,135</div><div class="td r" style="right:78.7px">45,464,132</div><div class="td r" style="right:31.3px">¥25,771,890</div><div class="td r" style="right:1.2px">146,728</div></div><div class="tr alt" style="top:109.91px;width:355.7px"><div class="td" style="left:2.4px">Receivers</div><div class="td r" style="right:225.0px">¥16,555,836</div><div class="td r" style="right:137.4px">¥2,643,045</div><div class="td r" style="right:78.7px">59,528,536</div><div class="td r" style="right:31.3px">¥40,329,668</div><div class="td r" style="right:1.2px">150,568</div></div><div class="tr" style="top:122.84px;width:355.7px"><div class="td" style="left:2.4px">Flat Panel TV</div><div class="td r" style="right:225.0px">¥15,885,499</div><div class="td r" style="right:137.4px">¥3,478,829</div><div class="td r" style="right:78.7px">78,441,670</div><div class="td r" style="right:31.3px">¥59,077,345</div><div class="td r" style="right:1.2px">92,501</div></div><div class="tr alt" style="top:135.77px;width:355.7px"><div class="td" style="left:2.4px">Smartphone</div><div class="td r" style="right:225.0px">¥15,834,702</div><div class="td r" style="right:137.4px">¥2,790,776</div><div class="td r" style="right:78.7px">62,661,241</div><div class="td r" style="right:31.3px">¥44,035,774</div><div class="td r" style="right:1.2px">205,049</div></div><div class="tr" style="top:148.70px;width:355.7px"><div class="td" style="left:2.4px">iPod Docking Station</div><div class="td r" style="right:225.0px">¥15,328,473</div><div class="td r" style="right:137.4px">¥1,926,925</div><div class="td r" style="right:78.7px">43,374,495</div><div class="td r" style="right:31.3px">¥26,119,093</div><div class="td r" style="right:1.2px">311,103</div></div></div><div style="left:2.2px;top:35.0px;width:3.4px;height:2.6px;background:#e3e3e3"></div></div><div class="sb"><div style="left:1.6px;top:3.6px;width:0;height:0;border-left:2px solid transparent;border-right:2px solid transparent;border-bottom:2.4px solid #444"></div><div class="thumb"><div style="left:1.2px;top:155px;width:3.6px;height:4.4px;background:repeating-linear-gradient(#777 0,#777 .7px,transparent .7px,transparent 1.5px)"></div></div><div style="left:1.4px;top:367.4px;width:0;height:0;border-left:2.2px solid transparent;border-right:2.2px solid transparent;border-top:2.4px solid #444"></div></div></div><div style="left:742.4px;top:-6.6px;width:13px;height:13px;border-radius:50%;background:#000;border:1.3px solid #fff;box-shadow:0 0 2px rgba(0,0,0,.6)"><svg width="11" height="11" viewBox="0 0 11 11"><path d="M3 3l5 5M8 3l-5 5" stroke="#fff" stroke-width="1.6"/></svg></div></body></html>
